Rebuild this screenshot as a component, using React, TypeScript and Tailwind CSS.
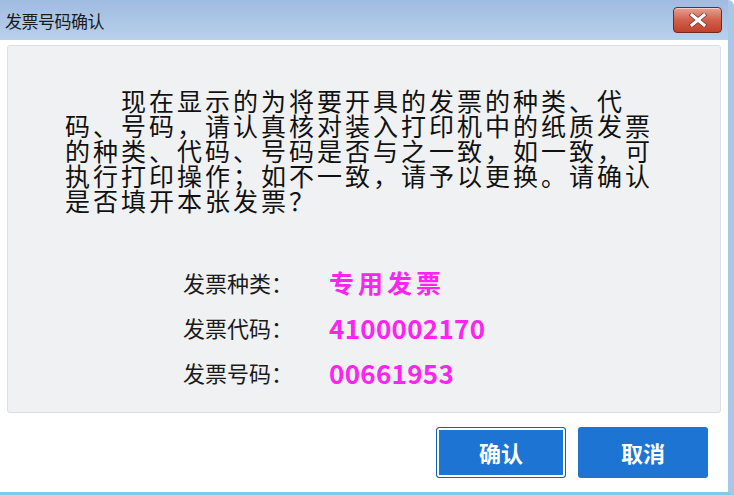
import React from 'react';

const cjk = { fontFamily: '"Noto Sans CJK SC", "Noto Sans", sans-serif' };

const lines = [
  '现在显示的为将要开具的发票的种类、代',
  '码、号码，请认真核对装入打印机中的纸质发票',
  '的种类、代码、号码是否与之一致，如一致，可',
  '执行打印操作；如不一致，请予以更换。请确认',
  '是否填开本张发票？',
];

const rows = [
  { label: '发票种类：', value: '专用发票', cn: true },
  { label: '发票代码：', value: '4100002170', cn: false },
  { label: '发票号码：', value: '00661953', cn: false },
];

const CloseButton: React.FC = () => (
  <button className="w-[49px] h-[26px] rounded-[4px] border border-[#6e2b22] bg-gradient-to-b from-[#e6a093] via-[#d0604c] to-[#c1402b] flex items-center justify-center shadow-[inset_0_1px_0_rgba(255,255,255,0.5)]">
    <svg width="18" height="14" viewBox="0 0 18 14">
      <path d="M3 2 L15 12 M15 2 L3 12" stroke="#7a3a30" strokeWidth="4.5" strokeLinecap="square" />
      <path d="M3 2 L15 12 M15 2 L3 12" stroke="#ffffff" strokeWidth="3" strokeLinecap="square" />
    </svg>
  </button>
);

export default function App() {
  return (
    <div
      className="w-[734px] h-[495px] overflow-hidden bg-white flex flex-col border-r-[6px] border-b-[3px] border-r-[#a9c7e6] border-b-[#7fcbe5] rounded-tr-[6px]"
      style={cjk}
    >
      {/* title bar */}
      <div className="h-[40px] shrink-0 flex items-center justify-between pl-[5px] pr-[6px] bg-gradient-to-b from-[#9fbbe0] to-[#b9d1eb]">
        <span className="text-[17px] text-[#1b1b1b] tracking-[-0.5px] mt-[2px]">发票号码确认</span>
        <CloseButton />
      </div>

      {/* body */}
      <div className="flex-1 flex flex-col pl-[7px] pt-[5px] pr-[6px]">
        <div className="h-[368px] w-[714px] rounded-[3px] border border-[#dcdee2] bg-[#f0f1f3] pl-[57px] pt-[42px]">
          <div className="text-[25px] leading-[25px] tracking-[3px] text-[#111]">
            {lines.map((l, i) => (
              <div key={i} className={`whitespace-nowrap ${i === 0 ? 'pl-[56px]' : ''}`}>
                {l}
              </div>
            ))}
          </div>

          <div className="mt-[57px] ml-[118px] flex flex-col gap-[20px]">
            {rows.map(r => (
              <div key={r.label} className="flex items-center h-[25px]">
                <span className="w-[146px] text-[22px] text-[#1a1a1a]">{r.label}</span>
                {r.cn ? (
                  <span className="text-[25px] font-bold text-[#ff22f0] tracking-[4px]">{r.value}</span>
                ) : (
                  <span className="text-[26px] font-bold text-[#ff22f0] tracking-[0.3px]">{r.value}</span>
                )}
              </div>
            ))}
          </div>
        </div>

        <div className="flex justify-end gap-[12px] pr-[14px] mt-[14px]">
          <button className="w-[130px] h-[51px] rounded-[3px] bg-[#1e74d2] border border-[#1560b8] text-white text-[22px] font-bold flex items-center justify-center shadow-[inset_0_0_0_2px_#ffffff]">
            确认
          </button>
          <button className="w-[130px] h-[51px] rounded-[3px] bg-[#1e74d2] text-white text-[22px] font-bold flex items-center justify-center">
            取消
          </button>
        </div>
      </div>
    </div>
  );
}
